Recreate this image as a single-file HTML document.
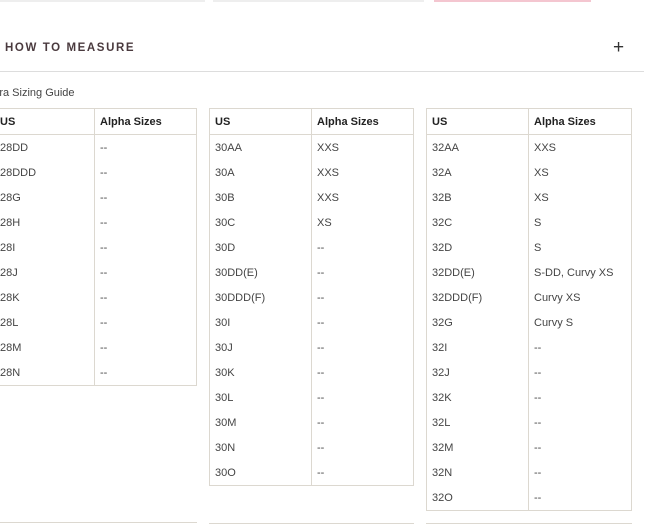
<!DOCTYPE html>
<html><head><style>
body{margin:0;width:646px;height:525px;overflow:hidden;background:#fff;font-family:"Liberation Sans",sans-serif;position:relative;color:#3a3a3a}
.bar{position:absolute;top:0;height:2px}
.h{position:absolute;left:5px;top:42px;font-size:11.5px;font-weight:bold;letter-spacing:1.6px;color:#4a3a3e}
.plus{position:absolute;left:613px;top:37px;font-size:19px;color:#333}
.line{position:absolute;left:0;top:71px;width:644px;height:1px;background:#ddd}
.g{position:absolute;left:-8px;top:87px;font-size:11px;color:#444}
table{position:absolute;top:108px;border-collapse:collapse;font-size:11px;color:#444}
td,th{border:1px solid #dcd8d0;height:25px;padding:0 5px;text-align:left;vertical-align:middle}
th{font-weight:bold;color:#222;height:25px}
td{border-top:none;border-bottom:none}
tr:last-child td{border-bottom:1px solid #dcd8d0}
</style></head><body>
<div class="bar" style="left:0;width:205px;background:#eee"></div>
<div class="bar" style="left:213px;width:211px;background:#eee"></div>
<div class="bar" style="left:434px;width:157px;background:#f4c6d0"></div>
<div class="h">HOW TO MEASURE</div><div class="plus">+</div>
<div class="line"></div>
<div class="g">Bra Sizing Guide</div>
<table style="left:-6px;width:203px"><tr><th style="width:89px">US</th><th>Alpha Sizes</th></tr>
<tr><td>28DD</td><td>--</td></tr><tr><td>28DDD</td><td>--</td></tr><tr><td>28G</td><td>--</td></tr><tr><td>28H</td><td>--</td></tr><tr><td>28I</td><td>--</td></tr><tr><td>28J</td><td>--</td></tr><tr><td>28K</td><td>--</td></tr><tr><td>28L</td><td>--</td></tr><tr><td>28M</td><td>--</td></tr><tr><td>28N</td><td>--</td></tr></table>
<table style="left:209px;width:205px"><tr><th style="width:91px">US</th><th>Alpha Sizes</th></tr>
<tr><td>30AA</td><td>XXS</td></tr><tr><td>30A</td><td>XXS</td></tr><tr><td>30B</td><td>XXS</td></tr><tr><td>30C</td><td>XS</td></tr><tr><td>30D</td><td>--</td></tr><tr><td>30DD(E)</td><td>--</td></tr><tr><td>30DDD(F)</td><td>--</td></tr><tr><td>30I</td><td>--</td></tr><tr><td>30J</td><td>--</td></tr><tr><td>30K</td><td>--</td></tr><tr><td>30L</td><td>--</td></tr><tr><td>30M</td><td>--</td></tr><tr><td>30N</td><td>--</td></tr><tr><td>30O</td><td>--</td></tr></table>
<table style="left:426px;width:206px"><tr><th style="width:91px">US</th><th>Alpha Sizes</th></tr>
<tr><td>32AA</td><td>XXS</td></tr><tr><td>32A</td><td>XS</td></tr><tr><td>32B</td><td>XS</td></tr><tr><td>32C</td><td>S</td></tr><tr><td>32D</td><td>S</td></tr><tr><td>32DD(E)</td><td>S-DD, Curvy XS</td></tr><tr><td>32DDD(F)</td><td>Curvy XS</td></tr><tr><td>32G</td><td>Curvy S</td></tr><tr><td>32I</td><td>--</td></tr><tr><td>32J</td><td>--</td></tr><tr><td>32K</td><td>--</td></tr><tr><td>32L</td><td>--</td></tr><tr><td>32M</td><td>--</td></tr><tr><td>32N</td><td>--</td></tr><tr><td>32O</td><td>--</td></tr></table>
<div style="position:absolute;left:0;top:522px;width:197px;height:1px;background:#dcd8d0"></div>
<div style="position:absolute;left:209px;top:523px;width:205px;height:1px;background:#dcd8d0"></div>
<div style="position:absolute;left:426px;top:523px;width:206px;height:1px;background:#dcd8d0"></div>
</body></html>
